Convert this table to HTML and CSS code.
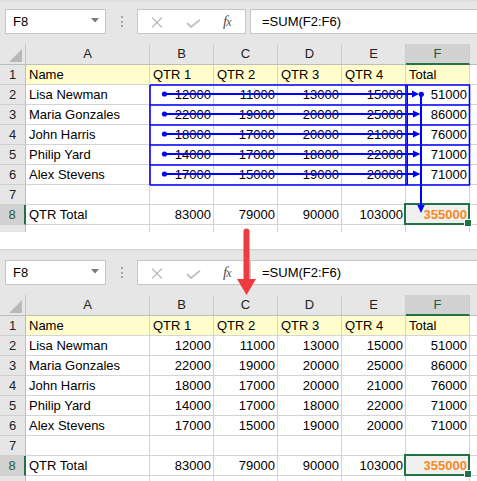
FILE: index.html
```html
<!DOCTYPE html>
<html>
<head>
<meta charset="utf-8">
<link rel="stylesheet" href="styles.css">
</head>
<body>
<div class="page">

<section class="shot shot-top">
  <div class="toolbar">
    <div class="namebox">F8<svg class="dd" width="8" height="5" viewBox="0 0 8 5"><path d="M0 0H8L4 4.5Z" fill="#7a7a7a"/></svg></div>
    <div class="dots"><i></i><i></i><i></i></div>
    <div class="fbtns">
      <svg class="ico-x" width="12" height="11" viewBox="0 0 12 11"><path d="M1 0.5L11 10.5M11 0.5L1 10.5" stroke="#bdbdbd" stroke-width="1.4" fill="none"/></svg>
      <svg class="ico-ok" width="15" height="9" viewBox="0 0 15 9"><path d="M1 4L5 8L14 0.8" stroke="#c2c2c2" stroke-width="2" fill="none"/></svg>
      <span class="fx">f<span class="fxx">x</span></span>
    </div>
    <div class="finput">=SUM(F2:F6)</div>
  </div>
  <div class="grid grid-top">
    <div class="corner"><svg width="13" height="13" viewBox="0 0 13 13"><path d="M13 0V13H0Z" fill="#b9b9b9"/></svg></div>
    <div class="ch">A</div><div class="ch">B</div><div class="ch">C</div><div class="ch">D</div><div class="ch">E</div><div class="ch sel-col">F</div><div class="ch last"></div>

    <div class="rh">1</div><div class="c y">Name</div><div class="c y">QTR 1</div><div class="c y">QTR 2</div><div class="c y">QTR 3</div><div class="c y">QTR 4</div><div class="c y">Total</div><div class="c last"></div>
    <div class="rh">2</div><div class="c">Lisa Newman</div><div class="c n">12000</div><div class="c n">11000</div><div class="c n">13000</div><div class="c n">15000</div><div class="c n">51000</div><div class="c last"></div>
    <div class="rh">3</div><div class="c">Maria Gonzales</div><div class="c n">22000</div><div class="c n">19000</div><div class="c n">20000</div><div class="c n">25000</div><div class="c n">86000</div><div class="c last"></div>
    <div class="rh">4</div><div class="c">John Harris</div><div class="c n">18000</div><div class="c n">17000</div><div class="c n">20000</div><div class="c n">21000</div><div class="c n">76000</div><div class="c last"></div>
    <div class="rh">5</div><div class="c">Philip Yard</div><div class="c n">14000</div><div class="c n">17000</div><div class="c n">18000</div><div class="c n">22000</div><div class="c n">71000</div><div class="c last"></div>
    <div class="rh">6</div><div class="c">Alex Stevens</div><div class="c n">17000</div><div class="c n">15000</div><div class="c n">19000</div><div class="c n">20000</div><div class="c n">71000</div><div class="c last"></div>
    <div class="rh">7</div><div class="c"></div><div class="c"></div><div class="c"></div><div class="c"></div><div class="c"></div><div class="c"></div><div class="c last"></div>
    <div class="rh sel-row">8</div><div class="c">QTR Total</div><div class="c n">83000</div><div class="c n">79000</div><div class="c n">90000</div><div class="c n">103000</div><div class="c n active">355000</div><div class="c last"></div>
    <div class="rh tail"></div><div class="c tail"></div><div class="c tail"></div><div class="c tail"></div><div class="c tail"></div><div class="c tail"></div><div class="c tail"></div><div class="c tail last"></div>
  </div>
  <div class="blank"></div>

  <svg class="trace" width="477" height="249" viewBox="0 0 477 249">
    <g stroke="#0000ff" fill="none" stroke-width="1.6">
      <path d="M150 85H470M150 105H470M150 125H470M150 145H470M150 165H470M150 185H470"/>
      <path d="M150 85V185M406 85V185M469.5 85V185"/>
      <path d="M407.5 85V185" stroke-width="1"/>
    </g>
    <g stroke="#0000ff" stroke-width="2" fill="none">
      <path d="M164.5 94H414M164.5 114H414M164.5 134H414M164.5 154H414M164.5 174H414"/>
      <path d="M421 94V206"/>
    </g>
    <g fill="#0000ff">
      <circle cx="164.5" cy="94" r="2.6"/><circle cx="164.5" cy="114" r="2.6"/><circle cx="164.5" cy="134" r="2.6"/><circle cx="164.5" cy="154" r="2.6"/><circle cx="164.5" cy="174" r="2.6"/>
      <circle cx="421.3" cy="94.3" r="2.6"/>
      <path d="M412 90.5L419 94L412 97.5Z"/>
      <path d="M413 110.5L420.5 114L413 117.5Z"/>
      <path d="M413 130.5L420.5 134L413 137.5Z"/>
      <path d="M413 150.5L420.5 154L413 157.5Z"/>
      <path d="M413 170.5L420.5 174L413 177.5Z"/>
      <path d="M417.3 205L424.7 205L421 213Z"/>
    </g>
  </svg>
</section>

<section class="shot shot-bottom">
  <div class="toolbar toolbar-edge">
    <div class="namebox">F8<svg class="dd" width="8" height="5" viewBox="0 0 8 5"><path d="M0 0H8L4 4.5Z" fill="#7a7a7a"/></svg></div>
    <div class="dots"><i></i><i></i><i></i></div>
    <div class="fbtns">
      <svg class="ico-x" width="12" height="11" viewBox="0 0 12 11"><path d="M1 0.5L11 10.5M11 0.5L1 10.5" stroke="#bdbdbd" stroke-width="1.4" fill="none"/></svg>
      <svg class="ico-ok" width="15" height="9" viewBox="0 0 15 9"><path d="M1 4L5 8L14 0.8" stroke="#c2c2c2" stroke-width="2" fill="none"/></svg>
      <span class="fx">f<span class="fxx">x</span></span>
    </div>
    <div class="finput">=SUM(F2:F6)</div>
  </div>
  <div class="grid grid-bottom">
    <div class="corner"><svg width="13" height="13" viewBox="0 0 13 13"><path d="M13 0V13H0Z" fill="#b9b9b9"/></svg></div>
    <div class="ch">A</div><div class="ch">B</div><div class="ch">C</div><div class="ch">D</div><div class="ch">E</div><div class="ch sel-col">F</div><div class="ch last"></div>

    <div class="rh">1</div><div class="c y">Name</div><div class="c y">QTR 1</div><div class="c y">QTR 2</div><div class="c y">QTR 3</div><div class="c y">QTR 4</div><div class="c y">Total</div><div class="c last"></div>
    <div class="rh">2</div><div class="c">Lisa Newman</div><div class="c n">12000</div><div class="c n">11000</div><div class="c n">13000</div><div class="c n">15000</div><div class="c n">51000</div><div class="c last"></div>
    <div class="rh">3</div><div class="c">Maria Gonzales</div><div class="c n">22000</div><div class="c n">19000</div><div class="c n">20000</div><div class="c n">25000</div><div class="c n">86000</div><div class="c last"></div>
    <div class="rh">4</div><div class="c">John Harris</div><div class="c n">18000</div><div class="c n">17000</div><div class="c n">20000</div><div class="c n">21000</div><div class="c n">76000</div><div class="c last"></div>
    <div class="rh">5</div><div class="c">Philip Yard</div><div class="c n">14000</div><div class="c n">17000</div><div class="c n">18000</div><div class="c n">22000</div><div class="c n">71000</div><div class="c last"></div>
    <div class="rh">6</div><div class="c">Alex Stevens</div><div class="c n">17000</div><div class="c n">15000</div><div class="c n">19000</div><div class="c n">20000</div><div class="c n">71000</div><div class="c last"></div>
    <div class="rh">7</div><div class="c"></div><div class="c"></div><div class="c"></div><div class="c"></div><div class="c"></div><div class="c"></div><div class="c last"></div>
    <div class="rh sel-row">8</div><div class="c">QTR Total</div><div class="c n">83000</div><div class="c n">79000</div><div class="c n">90000</div><div class="c n">103000</div><div class="c n active">355000</div><div class="c last"></div>
    <div class="rh tail"></div><div class="c tail"></div><div class="c tail"></div><div class="c tail"></div><div class="c tail"></div><div class="c tail"></div><div class="c tail"></div><div class="c tail last"></div>
  </div>
</section>

<svg class="red-arrow" width="24" height="74" viewBox="0 0 24 74">
  <path d="M9.5 4.5V56" stroke="#ef3b3f" stroke-width="6" stroke-linecap="round" fill="none"/>
  <path d="M0 52H19L9.5 68Z" fill="#ef3b3f"/>
</svg>

</div>
</body>
</html>
```

FILE: styles.css
```css
* { box-sizing: border-box; }

html, body {
  margin: 0;
  padding: 0;
  background: #ffffff;
}

body {
  width: 477px;
  height: 481px;
  overflow: hidden;
  font-family: "Liberation Sans", Arial, sans-serif;
  font-size: 13px;
  color: #000;
}

.page {
  position: relative;
  width: 477px;
  height: 481px;
  overflow: hidden;
}

.shot {
  position: relative;
  display: flex;
  flex-direction: column;
}

.shot-top {
  height: 249px;
}

.shot-bottom {
  height: 232px;
}

/* ---------- formula bar ---------- */
.toolbar {
  height: 44px;
  flex: none;
  display: flex;
  align-items: flex-start;
  padding: 9px 0 0 5px;
  background: linear-gradient(#d8d8d8 0, #e6e6e6 2px, #e6e6e6 100%);
}

.toolbar-edge {
  height: 46px;
  padding-top: 11px;
  background: linear-gradient(#cfcfcf 0, #dcdcdc 1px, #e6e6e6 3px, #e6e6e6 100%);
}

.namebox {
  position: relative;
  width: 101px;
  height: 25px;
  background: #fff;
  border: 1px solid #c6c6c6;
  padding-left: 7px;
  line-height: 23px;
  display: flex;
  align-items: center;
  justify-content: space-between;
  padding-right: 6px;
}

.dd {
  display: block;
  margin-top: -2px;
}

.dots {
  width: 31px;
  height: 25px;
  display: flex;
  flex-direction: column;
  align-items: center;
  justify-content: center;
  gap: 2.5px;
}

.dots i {
  display: block;
  width: 2px;
  height: 2px;
  background: #a4a4a4;
}

.fbtns {
  width: 109px;
  height: 25px;
  background: #fff;
  border: 1px solid #c6c6c6;
  display: flex;
  align-items: center;
  position: relative;
}

.ico-x {
  position: absolute;
  left: 13px;
  top: 7px;
}

.ico-ok {
  position: absolute;
  left: 48px;
  top: 9px;
}

.fx {
  position: absolute;
  left: 85px;
  top: 3px;
  font-family: "Liberation Serif", "Times New Roman", serif;
  font-style: italic;
  font-size: 15px;
  color: #555;
  line-height: 17px;
}

.fxx {
  font-size: 12px;
  margin-left: -1px;
}

.finput {
  flex: 1;
  margin-left: 4px;
  margin-right: -3px;
  height: 25px;
  background: #fff;
  border: 1px solid #c6c6c6;
  padding-left: 11px;
  line-height: 23px;
}

/* ---------- grid ---------- */
.grid {
  display: grid;
  grid-template-columns: 26px 124px 64px 64px 64px 64px 64px 8px;
  flex: none;
}

.grid-top {
  grid-template-rows: 21px repeat(8, 20px) 7px;
}

.grid-bottom {
  grid-template-rows: 21px repeat(8, 20px) 5px;
}

.corner {
  background: #e6e6e6;
  border-right: 1px solid #c6c6c6;
  border-bottom: 1px solid #bdbdbd;
  display: flex;
  align-items: flex-end;
  justify-content: flex-end;
  padding: 0 3px 2px 0;
}

.corner svg { display: block; }

.ch {
  background: #e6e6e6;
  border-right: 1px solid #cbcbcb;
  border-bottom: 1px solid #bdbdbd;
  text-align: center;
  line-height: 20px;
  color: #222;
}

.ch.last { border-right: 0; }

.ch.sel-col {
  background: #d2d2d2;
  border-bottom: 2px solid #217346;
  color: #1d5c3a;
}

.rh {
  background: #e6e6e6;
  border-right: 1px solid #bdbdbd;
  border-bottom: 1px solid #cfcfcf;
  text-align: center;
  line-height: 19px;
  color: #222;
}

.rh.sel-row {
  background: #d2d2d2;
  border-right: 2px solid #217346;
  color: #1d5c3a;
}

.c {
  border-right: 1px solid #d4d4d4;
  border-bottom: 1px solid #d4d4d4;
  line-height: 19px;
  padding-left: 3px;
  white-space: nowrap;
  background: #fff;
}

.c.last { border-right: 0; }

.c.y { background: #fffdcc; }

.c.n {
  text-align: right;
  padding-left: 0;
  padding-right: 2px;
}

.c.active {
  position: relative;
  background: #f0f0f0;
  color: #f58a1f;
  font-weight: bold;
}

.c.active::after {
  content: "";
  position: absolute;
  left: -2px;
  top: -2px;
  right: -1px;
  bottom: -1px;
  border: 2px solid #217346;
}

.c.active::before {
  content: "";
  position: absolute;
  right: -3px;
  bottom: -3px;
  width: 6px;
  height: 6px;
  background: #217346;
  border: 1px solid #fff;
  z-index: 1;
}

.tail { border-bottom: 0; }

.blank {
  flex: 1;
  background: #fff;
}

/* ---------- overlays ---------- */
.trace {
  position: absolute;
  left: 0;
  top: 0;
  pointer-events: none;
}

.red-arrow {
  position: absolute;
  left: 237px;
  top: 227px;
}
```
